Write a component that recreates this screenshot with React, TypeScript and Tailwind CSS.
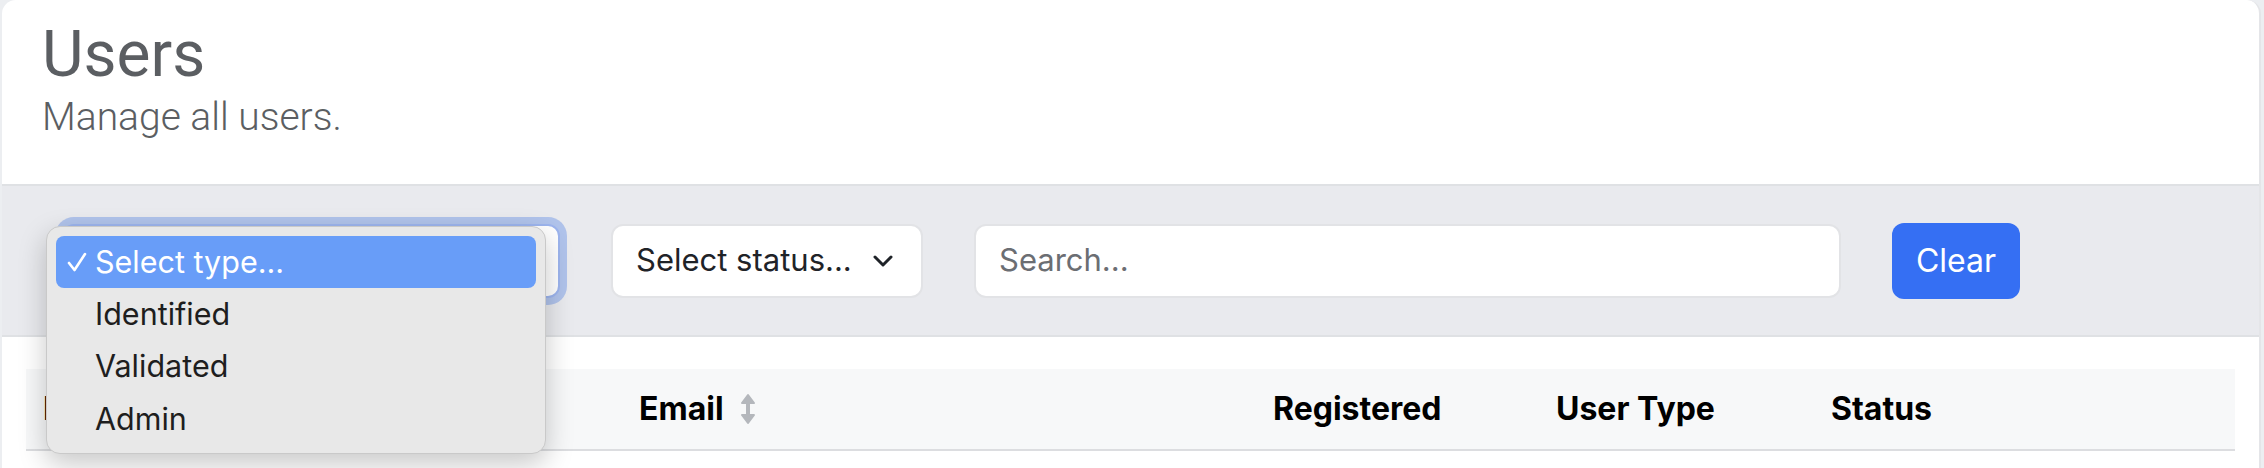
import React from "react";

const inter = { fontFamily: "Inter, 'Noto Sans', sans-serif" };

function SortIcon() {
  return (
    <svg width="16" height="32" viewBox="0 0 16 32" className="shrink-0">
      <line x1="8" y1="6" x2="8" y2="26" stroke="#b4b7bc" strokeWidth="4" strokeLinecap="round" />
      <path d="M2 10 L8 2 L14 10 Z" fill="#b4b7bc" stroke="#b4b7bc" strokeWidth="2" strokeLinejoin="round" />
      <path d="M2 22 L8 30 L14 22 Z" fill="#b4b7bc" stroke="#b4b7bc" strokeWidth="2" strokeLinejoin="round" />
    </svg>
  );
}

function Chevron() {
  return (
    <svg width="20" height="12" viewBox="0 0 20 12" className="shrink-0">
      <path d="M2 2 L10 10 L18 2" fill="none" stroke="#1f2328" strokeWidth="3" strokeLinecap="round" strokeLinejoin="round" />
    </svg>
  );
}

export default function App() {
  return (
    <div className="w-[2264px] h-[468px] overflow-hidden bg-[#eceef1] pl-[2px]">
      <div className="w-[2259px] h-[468px] bg-white rounded-t-[14px] border-r-2 border-[#e4e5e8] flex flex-col">
        {/* Title */}
        <div className="h-[184px] pl-[40px] pt-[22px]" style={{ fontFamily: "Roboto, 'Liberation Sans', sans-serif" }}>
          <div className="text-[64px] leading-[65px] text-[#5b5e62] font-normal">Users</div>
          <div className="mt-[11px] text-[39px] leading-[38px] text-[#5b5e62] font-light">Manage all users.</div>
        </div>

        {/* Filter band */}
        <div className="h-[153px] border-y-2 border-[#dfe1e4] bg-[#e9eaee] flex items-center pl-[60px] gap-[51px]" style={inter}>
          <div className="relative">
            <div className="w-[498px] h-[74px] rounded-[12px] bg-white border-2 border-[#9db5ee] shadow-[0_0_0_7px_rgba(120,155,232,0.5)] flex items-center justify-between pl-[25px] pr-[30px] text-[31px] text-[#1f2328]">
              <span className="invisible">Select type...</span>
              <Chevron />
            </div>
            {/* Native dropdown popup */}
            <div className="absolute left-[-16px] top-[2px] w-[500px] h-[228px] rounded-[14px] bg-[#e8e8e8] border border-[#c9c9c9] shadow-[0_10px_28px_rgba(0,0,0,0.22)] p-[9px] flex flex-col z-10">
              <div className="h-[52px] shrink-0 rounded-[8px] bg-[#689df8] flex items-center pl-[11px] text-white text-[30.5px]">
                <svg width="20" height="20" viewBox="0 0 20 20" className="shrink-0">
                  <path d="M2 11 L7.5 18 L18 2" fill="none" stroke="white" strokeWidth="2.6" strokeLinecap="round" strokeLinejoin="round" />
                </svg>
                <span className="ml-[8px]">Select type...</span>
              </div>
              {["Identified", "Validated", "Admin"].map((t) => (
                <div key={t} className="h-[52.5px] shrink-0 flex items-center pl-[39px] text-[30.5px] text-[#1e1e1e]">
                  {t}
                </div>
              ))}
            </div>
          </div>

          <div className="w-[312px] h-[74px] rounded-[12px] bg-white border-2 border-[#e2e3e6] flex items-center justify-between pl-[23px] pr-[28px] text-[31px] text-[#1f2328]">
            <span>Select status...</span>
            <Chevron />
          </div>

          <div className="w-[867px] h-[74px] rounded-[12px] bg-white border-2 border-[#e2e3e6] flex items-center pl-[23px] text-[31px] text-[#6b6e73]">
            Search...
          </div>

          <button className="w-[128px] h-[76px] rounded-[12px] bg-[#356ff3] text-white text-[32px] flex items-center justify-center">
            Clear
          </button>
        </div>

        {/* Table header */}
        <div className="px-[24px] pt-[32px]" style={inter}>
          <div className="h-[82px] bg-[#f7f8f9] border-b-2 border-[#dcdde0] flex items-center text-[32px] font-bold text-black">
            <div className="w-[596px] pl-[17px] flex items-center gap-[18px]">
              <span>Name</span>
              <SortIcon />
            </div>
            <div className="w-[634px] pl-[17px] flex items-center gap-[16px]">
              <span>Email</span>
              <SortIcon />
            </div>
            <div className="w-[283px] pl-[17px]">Registered</div>
            <div className="w-[275px] pl-[17px]">User Type</div>
            <div className="flex-1 pl-[17px]">Status</div>
          </div>
        </div>
      </div>
    </div>
  );
}
